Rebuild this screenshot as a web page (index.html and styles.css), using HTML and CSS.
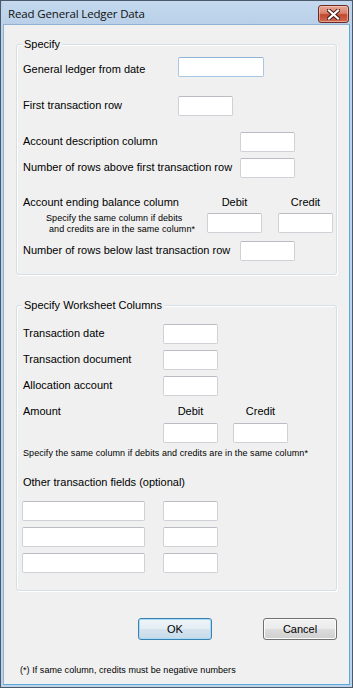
FILE: index.html
```html
<!DOCTYPE html>
<html>
<head>
<meta charset="utf-8">
<link rel="stylesheet" href="styles.css">
</head>
<body>
<div class="window">
  <div class="titlebar">
    <span class="title">Read General Ledger Data</span>
    <button class="close" aria-label="Close">
      <svg width="13" height="11" viewBox="0 0 13 11">
        <path d="M2 1.5 L11 9.5 M11 1.5 L2 9.5" stroke="#3d1610" stroke-width="4" stroke-linecap="square" fill="none"/>
        <path d="M2 1.5 L11 9.5 M11 1.5 L2 9.5" stroke="#ffffff" stroke-width="2.2" stroke-linecap="square" fill="none"/>
      </svg>
    </button>
  </div>
  <div class="client">
    <div class="group g1">
      <div class="legend">Specify</div>
      <div class="row r-a"><span class="lbl lbl-a">General ledger from date</span><input class="tb tb-date hover" type="text"></div>
      <div class="row r-b"><span class="lbl w155">First transaction row</span><input class="tb" type="text"></div>
      <div class="row r-c"><span class="lbl w217">Account description column</span><input class="tb" type="text"></div>
      <div class="row r-d"><span class="lbl w217">Number of rows above first transaction row</span><input class="tb" type="text"></div>
      <div class="row r-e"><span class="lbl w184">Account ending balance column</span><span class="hdr">Debit</span><span class="hdr gap16">Credit</span></div>
      <div class="row r-f">
        <div class="note w184"><span class="nl1">Specify the same column if debits</span><span class="nl2">and credits are in the same column*</span></div>
        <input class="tb" type="text"><input class="tb gap16" type="text">
      </div>
      <div class="row r-g"><span class="lbl w217">Number of rows below last transaction row</span><input class="tb" type="text"></div>
    </div>

    <div class="group g2">
      <div class="legend">Specify Worksheet Columns</div>
      <div class="row r-h"><span class="lbl w140">Transaction date</span><input class="tb" type="text"></div>
      <div class="row r-i"><span class="lbl w140">Transaction document</span><input class="tb" type="text"></div>
      <div class="row r-j"><span class="lbl w140">Allocation account</span><input class="tb" type="text"></div>
      <div class="row r-k"><span class="lbl w140">Amount</span><span class="hdr">Debit</span><span class="hdr gap15">Credit</span></div>
      <div class="row r-l"><span class="w140"></span><input class="tb" type="text"><input class="tb gap15" type="text"></div>
      <div class="smallnote">Specify the same column if debits and credits are in the same column*</div>
      <div class="other">Other transaction fields (optional)</div>
      <div class="row r-m"><input class="tb tb-wide" type="text"><input class="tb gap18" type="text"></div>
      <div class="row r-n"><input class="tb tb-wide" type="text"><input class="tb gap18" type="text"></div>
      <div class="row r-n"><input class="tb tb-wide" type="text"><input class="tb gap18" type="text"></div>
    </div>

    <div class="buttons">
      <button class="btn default">OK</button>
      <button class="btn">Cancel</button>
    </div>
    <div class="footer">(*) If same column, credits must be negative numbers</div>
  </div>
</div>
</body>
</html>
```
FILE: styles.css
```css
* { box-sizing: border-box; }
html, body { margin: 0; padding: 0; }
body {
  width: 353px;
  height: 688px;
  overflow: hidden;
  font-family: "Liberation Sans", Arial, sans-serif;
  font-size: 11px;
  color: #000;
}
.window {
  width: 353px;
  height: 688px;
  border: 1px solid #4a5a6b;
  background: #bcd3ea;
  padding: 0 2px 2px 2px;
  display: flex;
  flex-direction: column;
}
.titlebar {
  height: 23px;
  flex: none;
  display: flex;
  align-items: flex-start;
  background: linear-gradient(#c4d9ee, #b9d0e8);
  padding-left: 5px;
}
.title {
  font-family: "Open Sans", "Noto Sans", sans-serif;
  font-size: 11.5px;
  line-height: 16px;
  margin-top: 5px;
  color: #111;
  flex: 1;
  letter-spacing: -0.15px;
}
.close {
  width: 31px;
  height: 18px;
  margin: 4px 1px 0 0;
  padding: 0;
  border: 1px solid #6b2b22;
  border-radius: 3px;
  background: linear-gradient(#e8a594 0%, #d9826d 45%, #c2472f 55%, #cf6a4f 100%);
  box-shadow: inset 0 0 0 1px rgba(255,220,210,0.5);
  display: flex;
  align-items: center;
  justify-content: center;
}
.close svg { display: block; }
.client {
  flex: 1;
  background: #f0f0f0;
  border: 1px solid #8fb2d4;
  border-right-color: #5aa9db;
  border-bottom-color: #5aa9db;
  display: flex;
  flex-direction: column;
}
.group {
  margin: 0 12px;
  border: 1px solid #d5dfe5;
  border-radius: 3px;
  box-shadow: inset 1px 1px 0 #fff, 1px 1px 0 #fff;
  padding: 0 0 0 6px;
  display: flex;
  flex-direction: column;
}
.g1 { margin-top: 19px; padding-bottom: 13px; }
.g2 { margin-top: 30px; padding-bottom: 17px; }
.legend {
  align-self: flex-start;
  margin: -7px 0 0 -1px;
  padding: 0 2px;
  background: #f0f0f0;
  line-height: 13px;
  height: 13px;
}
.row {
  display: flex;
  align-items: flex-start;
  flex: none;
}
.lbl {
  line-height: 13px;
  margin-top: 3px;
  white-space: nowrap;
  flex: none;
}
.lbl-a { width: 155px; margin-top: 6px; }
.w155 { width: 155px; }
.w217 { width: 217px; }
.w184 { width: 184px; flex: none; }
.w140 { width: 140px; flex: none; }
.tb {
  width: 55px;
  height: 20px;
  margin: 0;
  padding: 0;
  background: #fff;
  border: 1px solid #cfd1d6;
  border-top-color: #b9bcc2;
  border-radius: 2px;
  flex: none;
  font: inherit;
}
.tb-date { width: 86px; }
.tb-wide { width: 123px; margin-left: -1px; }
.hover { border-color: #a9c6e2; border-top-color: #8fb3d6; }
.gap16 { margin-left: 16px; }
.gap15 { margin-left: 15px; }
.gap18 { margin-left: 18px; }
.hdr {
  width: 55px;
  text-align: center;
  line-height: 13px;
  flex: none;
}
.r-a { margin-top: 6px; }
.r-b { margin-top: 19px; }
.r-c { margin-top: 16px; }
.r-d { margin-top: 6px; }
.r-e { margin-top: 18px; }
.r-e .lbl { margin-top: 0; }
.r-f { margin-top: 4px; }
.r-g { margin-top: 6px; }
.note {
  font-size: 9px;
  line-height: 11px;
  display: flex;
  flex-direction: column;
  white-space: nowrap;
  letter-spacing: 0.07px;
}
.nl1 { padding-left: 23px; }
.nl2 { padding-left: 26px; }
.r-h { margin-top: 12px; }
.r-i { margin-top: 6px; }
.r-j { margin-top: 6px; }
.r-k { margin-top: 9px; }
.r-k .lbl { margin-top: 0; }
.r-l { margin-top: 5px; }
.smallnote {
  margin-top: 5px;
  font-size: 9px;
  line-height: 11px;
  white-space: nowrap;
  letter-spacing: 0.07px;
}
.other {
  margin-top: 17px;
  line-height: 13px;
}
.r-m { margin-top: 12px; }
.r-n { margin-top: 6px; }
.buttons {
  margin-top: 27px;
  display: flex;
  justify-content: flex-end;
  gap: 51px;
  padding-right: 12px;
}
.btn {
  width: 74px;
  height: 22px;
  margin: 0;
  padding: 0;
  font-family: "Liberation Sans", Arial, sans-serif;
  font-size: 11px;
  color: #000;
  border: 1px solid #707070;
  border-radius: 3px;
  background: linear-gradient(#f2f2f2 0%, #ebebeb 50%, #dddddd 50%, #cfcfcf 100%);
  box-shadow: inset 0 0 0 1px #fcfcfc;
}
.btn.default {
  border-color: #3c7fb1;
  box-shadow: inset 0 0 0 1px #a6dcf6;
  background: linear-gradient(#eef5fa 0%, #e3edf4 50%, #d5e3ee 50%, #c8dbea 100%);
}
.footer {
  margin-top: 25px;
  padding-left: 16px;
  font-size: 9px;
  line-height: 11px;
  letter-spacing: 0.05px;
  white-space: nowrap;
}
```
